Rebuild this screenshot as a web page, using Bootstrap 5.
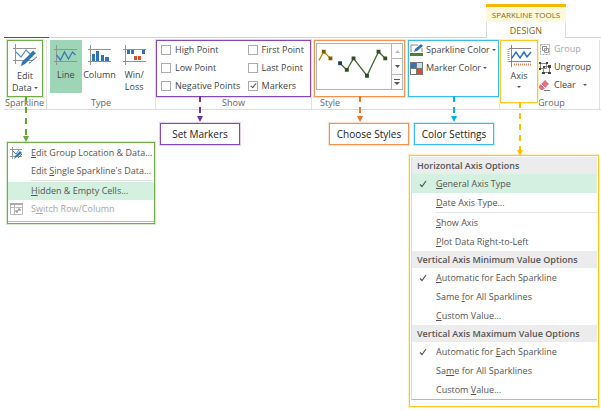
<!DOCTYPE html>
<html lang="en">
<head>
<meta charset="utf-8">
<meta name="viewport" content="width=device-width, initial-scale=1">
<title>Sparkline Tools</title>
<link href="https://cdn.jsdelivr.net/npm/bootstrap@5.3.0/dist/css/bootstrap.min.css" rel="stylesheet">
<style>
  body { font-family: "Open Sans", "Noto Sans", sans-serif; font-size: 9px; line-height: 12px; color: #444; background: #fff; }
  button { padding: 0; border: 0; background: transparent; color: inherit; font-size: 9px; line-height: 12px; }
  svg { display: block; flex: none; }
  u { text-underline-offset: 1px; text-decoration-thickness: 1px; }

  /* contextual tab */
  .tool-tab { width: 80px; margin-right: 35px; margin-bottom: -1px; position: relative; z-index: 1; }
  .tool-title { font-size: 8px; line-height: 15px; background: #fff9dc; border-top: 3px solid #f5b800; color: #8a6508; white-space: nowrap; }
  .tool-link { line-height: 15px; background: #fff; border: 1px solid #dcdcdc; border-width: 0 1px; color: #8a6508; text-decoration: none; padding-top: 1px; }

  /* ribbon */
  .ribbon { display: grid; grid-template-columns: minmax(0,42fr) minmax(0,109fr) minmax(0,156fr) minmax(0,188fr) minmax(0,100fr); position: relative; padding: 2px 1px 0 1px; margin-left: 4px; border-top: 1px solid #d4d4d4; border-bottom: 1px solid #dcdcdc; }
  .ribbon::before { content: ""; position: absolute; left: 0; top: -1px; width: 45px; height: 1px; background: #217346; }
  .group { border-right: 1px solid #e1e1e1; }
  .group-body { height: 57px; }
  .group-name { color: #666; white-space: nowrap; }
  .frame { position: relative; border: 1px solid var(--tone); box-shadow: 0 0 0 1px var(--halo); }
  .green { --tone: #70ad47; --halo: #d9ebcd; --ink: #62ab30; }
  .purple { --tone: #8648b8; --halo: #e3d3ef; --ink: #7030a0; }
  .orange { --tone: #f4924f; --halo: #fce0cc; --ink: #ed7423; }
  .blue { --tone: #38bdec; --halo: #cbeefb; --ink: #00b0f0; }
  .gold { --tone: #ffc71f; --halo: #ffefbd; --ink: #ffc000; }
  .big { display: flex; flex-direction: column; align-items: center; padding-top: 4px; }
  .big svg { margin-bottom: 3px; }
  .big.chosen { background: #9fd5b7; height: 53px; }
  .data-frame { margin: 0 3px 0 2px; --len: 46px; }
  .data-frame .big { padding-top: 3px; }
  .type-buttons { display: grid; grid-template-columns: 32fr 36fr 34fr; padding: 0 4px 0 3px; align-items: start; }
  .caret { display: inline-block; border: 2px solid transparent; border-top-color: #555; border-bottom: 0; vertical-align: 2px; }
  .tick { appearance: none; width: 10px; height: 10px; margin: 0; border: 1px solid #ababab; background: #fff; position: relative; flex: none; }
  .tick:checked::after { content: ""; position: absolute; left: 3px; top: 0; width: 3px; height: 6px; border: solid #555; border-width: 0 1px 1px 0; transform: rotate(40deg); }
  .show-frame { --at: 28%; }
  .ticks { display: grid; grid-template-columns: 86fr 62fr; grid-auto-rows: 18px; padding: 0 0 0 4px; }
  .style-frame { margin-left: 2px; }
  .gallery { border: 1px solid #b5b5b5; height: 47px; margin: 2px 1px 0; }
  .gallery-view { width: 0; }
  .scroller { width: 11px; border-left: 1px solid #b5b5b5; }
  .scroller button { flex: 1; display: flex; align-items: center; justify-content: center; }
  .scroller button + button { border-top: 1px solid #b5b5b5; }
  .color-frame { margin-left: 3px; width: 91px; }
  .line-btn { display: flex; align-items: center; gap: 3px; padding-left: 1px; height: 18px; white-space: nowrap; text-align: left; }
  .axis-frame { width: 38px; height: 63px; --len: 54px; }
  button.dim { color: #a6a6a6; }

  /* dashed connectors that hang from the framed controls */
  .arrow { position: absolute; z-index: 2; top: 100%; left: var(--at, 50%); width: 9px; margin-left: -4px; height: var(--len, 26px); color: var(--ink); display: flex; flex-direction: column; align-items: center; }
  .arrow::before { content: ""; flex: 1; width: 2px; background: repeating-linear-gradient(currentColor 0 6px, transparent 6px 11px); }
  .arrow::after { content: ""; border: 3px solid transparent; border-top: 6px solid currentColor; border-bottom: 0; }

  /* callouts and menus */
  .lower { display: grid; grid-template-columns: minmax(0,154fr) minmax(0,168fr) minmax(0,87fr) minmax(0,190fr); align-items: start; padding: 13px 2px 3px 0; }
  .callout { width: 80px; height: 22px; font-size: 10px; line-height: 20px; text-align: center; color: #222; white-space: nowrap; }
  .callout.purple { margin-left: 6px; }
  .callout.orange { margin-left: 7px; }
  .callout.blue { margin-left: 5px; }
  .menu-item { display: flex; align-items: center; width: 100%; color: #555; text-align: left; white-space: nowrap; }
  .menu-item.active-item { background: #d3f0e0; }
  .edit-menu { margin: 19px 0 0 7px; width: 148px; padding: 1px 0; }
  .edit-menu .menu-item { height: 18px; }
  .edit-menu .glyph { width: 23px; padding-left: 2px; flex: none; }
  .edit-menu .rule { border-top: 1px solid #e1e1e1; margin: 0 1px 1px 23px; }
  .edit-menu .end-rule { border-top: 1px solid #bbb; margin-top: 3px; }
  .axis-menu { margin-top: 10px; padding: 1px 1px 6px; }
  .axis-sheet { border-bottom: 1px solid #b8b8b8; border-left: 1px solid #d8dde6; }
  .axis-menu .menu-item { height: 19px; }
  .axis-menu .glyph { width: 24px; padding-left: 7px; flex: none; }
  .axis-menu .rule { border-top: 1px solid #dfe3e6; margin-left: 24px; }
  .menu-head { font-size: 9px; font-weight: 600; line-height: 17px; background: #ececec; color: #555; margin: 0; padding-left: 5px; white-space: nowrap; }
</style>
</head>
<body>
<svg width="0" height="0" class="position-absolute" aria-hidden="true">
  <symbol id="axes" viewBox="0 0 25 22"><path d="M3.500 1v20M1 5.500h23M1 17.500h23" fill="none" stroke="#929292"/></symbol>
  <symbol id="check" viewBox="0 0 8 8"><path d="M1 4.500l2 2L7 1" fill="none" stroke="#555" stroke-width="1.200"/></symbol>
</svg>

<header class="d-flex justify-content-end pt-1">
  <div class="tool-tab text-center">
    <div class="tool-title">SPARKLINE TOOLS</div>
    <a class="tool-link d-block" href="#design">DESIGN</a>
  </div>
</header>

<section class="ribbon" id="design" aria-label="Design ribbon">
  <div class="group d-flex flex-column">
    <div class="group-body frame green data-frame">
      <button type="button" class="big w-100">
        <svg width="26" height="23" viewBox="0 0 26 23"><path d="M3.500 0v20M1 4.500h23M1 16.500h20" fill="none" stroke="#929292"/><path d="M4 8l5 5 5-7 4 4 4-3" fill="none" stroke="#5b93cc" stroke-width="1.200"/><path d="M9 22l1-4 11-11 3 2-11 11z" fill="#2f75b5"/><path d="M17 19c3 0 2-3 4-3s2-3 4-3" fill="none" stroke="#2f75b5"/></svg>
        <span>Edit</span><span>Data <i class="caret"></i></span>
      </button>
      <i class="arrow"></i>
    </div>
    <div class="group-name">Sparkline</div>
  </div>

  <div class="group d-flex flex-column">
    <div class="group-body type-buttons">
      <button type="button" class="big chosen">
        <svg width="25" height="22" viewBox="0 0 25 22"><use href="#axes"/><path d="M3.500 11l4 5 4-8 4 7 4-7 3 3" fill="none" stroke="#3a78b8" stroke-width="1.300"/></svg>
        <span>Line</span>
      </button>
      <button type="button" class="big">
        <svg width="25" height="22" viewBox="0 0 25 22"><use href="#axes"/><path d="M5 10h3v7H5zM9 7h3v10H9zM14 11h3v6h-3zM18 13h4v4h-4z" fill="#2f75b5"/></svg>
        <span>Column</span>
      </button>
      <button type="button" class="big">
        <svg width="25" height="22" viewBox="0 0 25 22"><use href="#axes"/><path d="M5 6h3v4H5zM9 6h3v4H9zM20 6h3v4h-3z" fill="#2f75b5"/><path d="M12 12h3v4h-3zM16 12h3v4h-3z" fill="#d9502e"/></svg>
        <span>Win/</span><span>Loss</span>
      </button>
    </div>
    <div class="group-name text-center">Type</div>
  </div>

  <div class="group d-flex flex-column">
    <div class="group-body frame purple show-frame">
      <div class="ticks">
        <label class="d-flex align-items-center gap-1 text-nowrap"><input class="tick" type="checkbox">High Point</label>
        <label class="d-flex align-items-center gap-1 text-nowrap"><input class="tick" type="checkbox">First Point</label>
        <label class="d-flex align-items-center gap-1 text-nowrap"><input class="tick" type="checkbox">Low Point</label>
        <label class="d-flex align-items-center gap-1 text-nowrap"><input class="tick" type="checkbox">Last Point</label>
        <label class="d-flex align-items-center gap-1 text-nowrap"><input class="tick" type="checkbox">Negative Points</label>
        <label class="d-flex align-items-center gap-1 text-nowrap"><input class="tick" type="checkbox" checked>Markers</label>
      </div>
      <i class="arrow"></i>
    </div>
    <div class="group-name text-center">Show</div>
  </div>

  <div class="group d-flex flex-column">
    <div class="group-body d-flex">
      <div class="frame orange flex-fill style-frame">
        <div class="gallery d-flex">
          <svg class="flex-fill gallery-view" height="45" viewBox="0 0 77 45" preserveAspectRatio="xMinYMin" role="img" aria-label="Sparkline styles">
            <path d="M2 17l5-9 7 7" fill="none" stroke="#b8860b" stroke-width="1.300"/>
            <path d="M5 6h4v4H5zM12 13h4v4h-4z" fill="#7f5c00"/>
            <path d="M24 20l7 7 7-12 14 18L64 8l7 7" fill="none" stroke="#44682f" stroke-width="1.300"/>
            <path d="M29 25h4v4h-4zM36 13h4v4h-4zM50 31h4v4h-4zM62 6h4v4h-4zM69 13h4v4h-4z" fill="#2f4f1f"/>
            <path d="M22 18h4v4h-4z" fill="#1f3864"/>
          </svg>
          <div class="scroller d-flex flex-column">
            <button type="button" aria-label="Previous styles"><svg width="5" height="3"><path d="M0 3l2.500-3L5 3z" fill="#bbb"/></svg></button>
            <button type="button" aria-label="Next styles"><svg width="5" height="3"><path d="M0 0h5L2.500 3z" fill="#555"/></svg></button>
            <button type="button" aria-label="More styles"><svg width="6" height="6"><path d="M0 0h6v1H0zM0 3h6L3 6z" fill="#555"/></svg></button>
          </div>
        </div>
        <i class="arrow"></i>
      </div>
      <div class="frame blue color-frame">
        <button type="button" class="line-btn">
          <svg width="13" height="13" viewBox="0 0 13 13"><path d="M8 1H1v7M12 4v4" fill="none" stroke="#888"/><path d="M4 8l1-3 6-5 2 2-6 5z" fill="#2f75b5"/><path d="M0 9h13v3H0z" fill="#4a8230"/></svg>
          <span>Sparkline Color <i class="caret"></i></span>
        </button>
        <button type="button" class="line-btn">
          <svg width="13" height="13" viewBox="0 0 13 13"><path d="M0 0h13v13H0z" fill="#777"/><path d="M1 1h5v5H1z" fill="#2f75b5"/><path d="M7 1h5v5H7z" fill="#c5dcf1"/><path d="M1 7h5v5H1z" fill="#fff"/><path d="M7 7h5v5H7z" fill="#d9502e"/></svg>
          <span>Marker Color <i class="caret"></i></span>
        </button>
        <i class="arrow"></i>
      </div>
    </div>
    <div class="group-name ps-2">Style</div>
  </div>

  <div class="group d-flex align-items-start">
    <div class="axis-frame frame gold flex-shrink-0">
      <button type="button" class="big w-100">
        <svg width="26" height="22" viewBox="0 0 26 22"><path d="M5.500 0v22M3 3.500h22M3 16.500h22" fill="none" stroke="#858585"/><path d="M6 13l4-6 4 6 4-6 3 5 4-5" fill="none" stroke="#2f75b5" stroke-width="1.500"/><path d="M2.500 4v14" stroke="#e5825b" stroke-width="2" stroke-dasharray="1 1"/><path d="M8 19.500h17" stroke="#e5825b" stroke-width="2" stroke-dasharray="1 1"/></svg>
        <span>Axis</span><i class="caret mt-1"></i>
      </button>
      <i class="arrow"></i>
    </div>
    <div class="d-flex flex-column">
      <div class="group-body">
        <button type="button" class="line-btn dim" disabled>
          <svg width="12" height="13" viewBox="0 0 12 13"><path d="M1.500 1.500h9v10h-9z" fill="none" stroke="#aaa" stroke-dasharray="2 1"/><path d="M3.500 3.500h4v4h-4zM5.500 5.500h4v4h-4z" fill="none" stroke="#999"/></svg>Group
        </button>
        <button type="button" class="line-btn">
          <svg width="12" height="13" viewBox="0 0 12 13"><path d="M1.500 2.500h6v5h-6zM4.500 5.500h6v6h-6z" fill="none" stroke="#888"/><path d="M0 1h2v2H0zM7 1h2v2H7zM0 7h2v2H0zM3 11h3v2H3zM9 11h3v2H9zM9 4h3v3H9zM4 5h2v2H4z" fill="#444"/></svg>Ungroup
        </button>
        <button type="button" class="line-btn">
          <svg width="12" height="13" viewBox="0 0 12 13"><path d="M0 7l6-6 4 4-6 6H2L0 9z" fill="#e8707e"/><path d="M2 5l4 4" stroke="#fff"/><path d="M5 11.500h6" stroke="#777"/></svg>Clear <i class="caret ms-1"></i>
        </button>
      </div>
      <div class="group-name">Group</div>
    </div>
  </div>
</section>

<main class="lower">
  <nav class="edit-menu frame green" aria-label="Edit data">
    <button type="button" class="menu-item"><span class="glyph"><svg width="13" height="12" viewBox="0 0 13 12"><path d="M2.500 0v12M0 2.500h12M0 9.500h12" stroke="#999" fill="none"/><path d="M3 4l3 3 3-4" fill="none" stroke="#4a86c5"/><path d="M4 12l1-3 5-5 2 2-5 4z" fill="#2f75b5"/><path d="M8 11l4-4" stroke="#2f75b5"/></svg></span><span><u>E</u>dit Group Location &amp; Data...</span></button>
    <button type="button" class="menu-item"><span class="glyph"></span><span>Edit <u>S</u>ingle Sparkline's Data...</span></button>
    <div class="rule"></div>
    <button type="button" class="menu-item active-item"><span class="glyph"></span><span><u>H</u>idden &amp; Empty Cells...</span></button>
    <button type="button" class="menu-item dim" disabled><span class="glyph"><svg width="13" height="12" viewBox="0 0 13 12"><path d="M.5 1.500h12v10H.5zM1 4.500h11M4.500 2v9" fill="none" stroke="#bbb"/><path d="M0 0h13v2H0z" fill="#aaa"/><path d="M6 9l4-3M8 6h2v2M6 7v2h2" fill="none" stroke="#888"/></svg></span><span>S<u>w</u>itch Row/Column</span></button>
    <div class="end-rule"></div>
  </nav>

  <div class="callout frame purple">Set Markers</div>
  <div class="callout frame orange">Choose Styles</div>

  <div>
    <div class="callout frame blue">Color Settings</div>
    <nav class="axis-menu frame gold" aria-label="Axis options">
      <div class="axis-sheet">
        <h2 class="menu-head">Horizontal Axis Options</h2>
        <button type="button" class="menu-item active-item"><span class="glyph"><svg width="8" height="8"><use href="#check"/></svg></span><span><u>G</u>eneral Axis Type</span></button>
        <button type="button" class="menu-item"><span class="glyph"></span><span><u>D</u>ate Axis Type...</span></button>
        <div class="rule"></div>
        <button type="button" class="menu-item"><span class="glyph"></span><span><u>S</u>how Axis</span></button>
        <button type="button" class="menu-item"><span class="glyph"></span><span><u>P</u>lot Data Right-to-Left</span></button>
        <h2 class="menu-head">Vertical Axis Minimum Value Options</h2>
        <button type="button" class="menu-item"><span class="glyph"><svg width="8" height="8"><use href="#check"/></svg></span><span><u>A</u>utomatic for Each Sparkline</span></button>
        <button type="button" class="menu-item"><span class="glyph"></span><span>Same <u>f</u>or All Sparklines</span></button>
        <button type="button" class="menu-item"><span class="glyph"></span><span><u>C</u>ustom Value...</span></button>
        <h2 class="menu-head">Vertical Axis Maximum Value Options</h2>
        <button type="button" class="menu-item"><span class="glyph"><svg width="8" height="8"><use href="#check"/></svg></span><span>Automatic for <u>E</u>ach Sparkline</span></button>
        <button type="button" class="menu-item"><span class="glyph"></span><span>Sa<u>m</u>e for All Sparklines</span></button>
        <button type="button" class="menu-item"><span class="glyph"></span><span>Custom <u>V</u>alue...</span></button>
      </div>
    </nav>
  </div>
</main>
<script src="https://cdn.jsdelivr.net/npm/bootstrap@5.3.0/dist/js/bootstrap.bundle.min.js"></script>
</body>
</html>
